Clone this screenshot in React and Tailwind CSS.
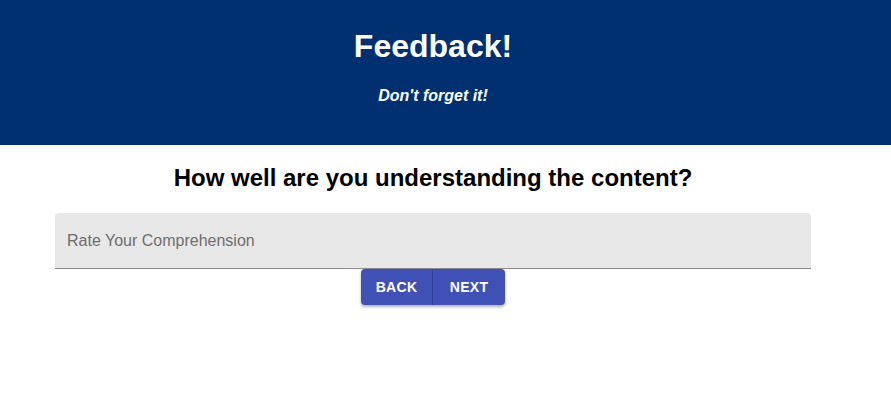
export default function App() {
  return (
    <div className="min-h-screen bg-white" style={{ fontFamily: '"Liberation Sans", Arial, sans-serif' }}>
      <header className="bg-[#003070] h-[145px] text-white">
        <div className="w-[866px] flex flex-col items-center pt-[27px]">
          <h1 className="text-[32px] font-bold leading-[38px]">Feedback!</h1>
          <p className="mt-[21px] text-[16px] font-bold italic leading-[20px]">Don't forget it!</p>
        </div>
      </header>
      <main className="w-[866px] flex flex-col items-center">
        <h2 className="mt-[19px] text-[24px] font-bold leading-[28px] text-black">How well are you understanding the content?</h2>
        <div className="mt-[21px] w-[756px] h-[56px] bg-[#e8e8e8] rounded-t-[4px] border-b border-[#8c8c8c] flex items-center px-3">
          <span className="text-[16px] text-[#6e6e6e]">Rate Your Comprehension</span>
        </div>
        <div className="flex rounded-[4px] shadow-[0_2px_3px_rgba(0,0,0,0.3)] bg-[#3f51b5] text-white text-[14px] font-bold">
          <button className="w-[72px] h-[36px] uppercase tracking-[0.3px] border-r border-[#30409a]">Back</button>
          <button className="w-[72px] h-[36px] uppercase tracking-[0.3px]">Next</button>
        </div>
      </main>
    </div>
  )
}
